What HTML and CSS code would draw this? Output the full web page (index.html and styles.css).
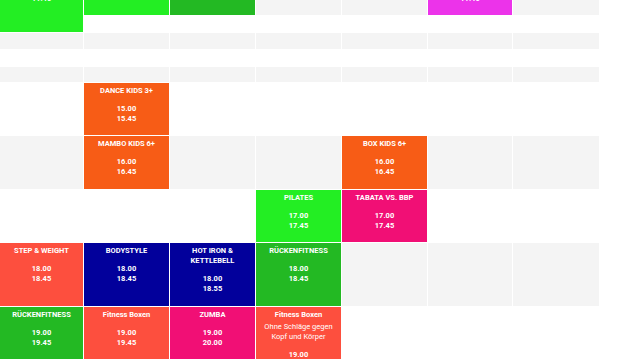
FILE: index.html
```html
<!DOCTYPE html>
<html lang="de">
<head>
<meta charset="utf-8">
<title>Kursplan</title>
<link rel="stylesheet" href="styles.css">
</head>
<body>
<div class="viewport">
  <div class="plan">
    <!-- row 0 -->
    <div class="cell ev green span2"><div class="t">BAUCH BEINE PO</div><div class="tm">11.00<br>11.45</div></div>
    <div class="cell ev green"></div>
    <div class="cell ev dgreen"></div>
    <div class="cell gray"></div>
    <div class="cell gray"></div>
    <div class="cell ev magenta"><div class="t">YOGA</div><div class="tm">11.00<br>11.45</div></div>
    <div class="cell gray"></div>
    <!-- row 1 -->
    <div class="cell"></div><div class="cell"></div><div class="cell"></div><div class="cell"></div><div class="cell"></div><div class="cell"></div>
    <!-- row 2 -->
    <div class="cell gray"></div><div class="cell gray"></div><div class="cell gray"></div><div class="cell gray"></div><div class="cell gray"></div><div class="cell gray"></div><div class="cell gray"></div>
    <!-- row 3 -->
    <div class="cell"></div><div class="cell"></div><div class="cell"></div><div class="cell"></div><div class="cell"></div><div class="cell"></div><div class="cell"></div>
    <!-- row 4 -->
    <div class="cell gray"></div><div class="cell gray"></div><div class="cell gray"></div><div class="cell gray"></div><div class="cell gray"></div><div class="cell gray"></div><div class="cell gray"></div>
    <!-- row 5 -->
    <div class="cell"></div>
    <div class="cell ev orange"><div class="t">DANCE KIDS 3+</div><div class="tm">15.00<br>15.45</div></div>
    <div class="cell"></div><div class="cell"></div><div class="cell"></div><div class="cell"></div><div class="cell"></div>
    <!-- row 6 -->
    <div class="cell gray"></div>
    <div class="cell ev orange"><div class="t">MAMBO KIDS 6+</div><div class="tm">16.00<br>16.45</div></div>
    <div class="cell gray"></div>
    <div class="cell gray"></div>
    <div class="cell ev orange"><div class="t">BOX KIDS 6+</div><div class="tm">16.00<br>16.45</div></div>
    <div class="cell gray"></div>
    <div class="cell gray"></div>
    <!-- row 7 -->
    <div class="cell"></div><div class="cell"></div><div class="cell"></div>
    <div class="cell ev green"><div class="t">PILATES</div><div class="tm">17.00<br>17.45</div></div>
    <div class="cell ev pink"><div class="t">TABATA VS. BBP</div><div class="tm">17.00<br>17.45</div></div>
    <div class="cell"></div><div class="cell"></div>
    <!-- row 8 -->
    <div class="cell ev red"><div class="t">STEP &amp; WEIGHT</div><div class="tm">18.00<br>18.45</div></div>
    <div class="cell ev navy"><div class="t">BODYSTYLE</div><div class="tm">18.00<br>18.45</div></div>
    <div class="cell ev navy"><div class="t">HOT IRON &amp;<br>KETTLEBELL</div><div class="tm">18.00<br>18.55</div></div>
    <div class="cell ev dgreen"><div class="t">RÜCKENFITNESS</div><div class="tm">18.00<br>18.45</div></div>
    <div class="cell gray"></div><div class="cell gray"></div><div class="cell gray"></div>
    <!-- row 9 -->
    <div class="cell ev dgreen"><div class="t">RÜCKENFITNESS</div><div class="tm">19.00<br>19.45</div></div>
    <div class="cell ev red"><div class="t">Fitness Boxen</div><div class="tm">19.00<br>19.45</div></div>
    <div class="cell ev pink"><div class="t">ZUMBA</div><div class="tm">19.00<br>20.00</div></div>
    <div class="cell ev red"><div class="t">Fitness Boxen</div><div class="sub">Ohne Schläge gegen<br>Kopf und Körper</div><div class="tm">19.00<br>19.45</div></div>
    <div class="cell"></div><div class="cell"></div><div class="cell"></div>
  </div>
</div>
</body>
</html>
```

FILE: styles.css
```css
html, body {
  margin: 0;
  padding: 0;
  background: #ffffff;
}
.viewport {
  width: 639px;
  height: 359px;
  overflow: hidden;
}
.plan {
  display: grid;
  grid-template-columns: 83px 85px 85px 85px 85px 84px 86px;
  grid-template-rows: 52px 16px 16px 16px 15px 52px 53px 52px 63px 60px;
  gap: 1px;
  width: 599px;
  margin-top: -37px;
  background: #ffffff;
  font-family: Roboto, "Liberation Sans", Arial, sans-serif;
  color: #ffffff;
}
.cell {
  background: #ffffff;
}
.cell.gray {
  background: #f4f4f4;
}
.span2 {
  grid-row: span 2;
}
.ev {
  text-align: center;
  font-size: 7.5px;
  font-weight: 700;
  padding-top: 3px;
  box-sizing: border-box;
  overflow: hidden;
}
.ev .t {
  line-height: 10px;
}
.ev .sub {
  font-weight: 400;
  line-height: 10px;
  margin-top: 2px;
}
.ev .tm {
  margin-top: 8px;
  line-height: 9.5px;
  font-size: 7.5px;
}
.green { background: #23ee23; }
.dgreen { background: #23b923; }
.orange { background: #f75c16; }
.red { background: #fd4f3e; }
.navy { background: #02009b; }
.pink { background: #f10f75; }
.magenta { background: #ec33ea; }
```
